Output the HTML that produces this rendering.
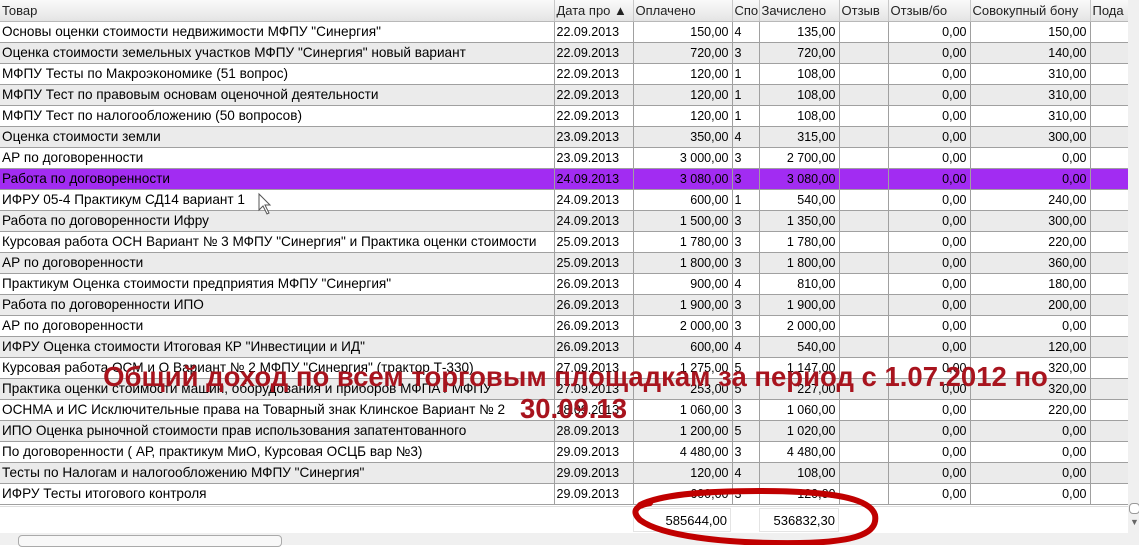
<!DOCTYPE html>
<html><head><meta charset="utf-8"><style>
body{margin:0;width:1139px;height:545px;overflow:hidden;background:#fff;font-family:"Liberation Sans","DejaVu Sans",sans-serif;font-size:13.6px;color:#000;position:relative}
table{border-collapse:collapse;table-layout:fixed;position:absolute;left:0;top:0;width:1128px}
td,th{height:20px;padding:0 3px 0 2px;border-right:1px solid #a0a0a0;border-bottom:1px solid #a0a0a0;white-space:nowrap;overflow:hidden;font-weight:normal;text-align:left;line-height:20px}
td.n{font-size:12.5px}
th{height:21px;background:linear-gradient(#fafafa,#e4e4e4);border-right:1px solid #c8c8c8;border-bottom:1px solid #b8b8b8;color:#222;font-size:13px}
td.r{text-align:right;font-size:12.5px}
tr:nth-child(even) td{background:#ebebeb}
tr.sel td{background:#a22cf2!important}
.vs{position:absolute;left:1128px;top:0;width:11px;height:545px;background:#f0f0f0}
.foot{position:absolute;left:0;top:506px;width:1128px;height:27px;background:#fff;border-top:1px solid #ddd}
.hs{position:absolute;left:0;top:533px;width:1128px;height:12px;background:#f0f0f0}
.t{position:absolute;left:0;width:1139px;text-align:center;font-weight:bold;font-size:27.5px;color:#a8141e}
</style></head><body>
<table>
<colgroup><col style="width:554px"><col style="width:79px"><col style="width:99px"><col style="width:27px"><col style="width:80px"><col style="width:49px"><col style="width:82px"><col style="width:120px"><col style="width:38px"></colgroup>
<thead><tr><th>Товар</th><th>Дата про ▲</th><th>Оплачено</th><th>Спо</th><th>Зачислено</th><th>Отзыв</th><th>Отзыв/бо</th><th>Совокупный бону</th><th>Пода</th></tr></thead>
<tbody>
<tr><td>Основы оценки стоимости недвижимости МФПУ "Синергия"</td><td class="n">22.09.2013</td><td class="r">150,00</td><td class="n">4</td><td class="r">135,00</td><td></td><td class="r">0,00</td><td class="r">150,00</td><td></td></tr>
<tr><td>Оценка стоимости земельных участков МФПУ "Синергия" новый вариант</td><td class="n">22.09.2013</td><td class="r">720,00</td><td class="n">3</td><td class="r">720,00</td><td></td><td class="r">0,00</td><td class="r">140,00</td><td></td></tr>
<tr><td>МФПУ Тесты по Макроэкономике (51 вопрос)</td><td class="n">22.09.2013</td><td class="r">120,00</td><td class="n">1</td><td class="r">108,00</td><td></td><td class="r">0,00</td><td class="r">310,00</td><td></td></tr>
<tr><td>МФПУ Тест по правовым основам оценочной деятельности</td><td class="n">22.09.2013</td><td class="r">120,00</td><td class="n">1</td><td class="r">108,00</td><td></td><td class="r">0,00</td><td class="r">310,00</td><td></td></tr>
<tr><td>МФПУ Тест по налогообложению (50 вопросов)</td><td class="n">22.09.2013</td><td class="r">120,00</td><td class="n">1</td><td class="r">108,00</td><td></td><td class="r">0,00</td><td class="r">310,00</td><td></td></tr>
<tr><td>Оценка стоимости земли</td><td class="n">23.09.2013</td><td class="r">350,00</td><td class="n">4</td><td class="r">315,00</td><td></td><td class="r">0,00</td><td class="r">300,00</td><td></td></tr>
<tr><td>АР по договоренности</td><td class="n">23.09.2013</td><td class="r">3 000,00</td><td class="n">3</td><td class="r">2 700,00</td><td></td><td class="r">0,00</td><td class="r">0,00</td><td></td></tr>
<tr class="sel"><td>Работа по договоренности</td><td class="n">24.09.2013</td><td class="r">3 080,00</td><td class="n">3</td><td class="r">3 080,00</td><td></td><td class="r">0,00</td><td class="r">0,00</td><td></td></tr>
<tr><td>ИФРУ 05-4 Практикум СД14 вариант 1</td><td class="n">24.09.2013</td><td class="r">600,00</td><td class="n">1</td><td class="r">540,00</td><td></td><td class="r">0,00</td><td class="r">240,00</td><td></td></tr>
<tr><td>Работа по договоренности Ифру</td><td class="n">24.09.2013</td><td class="r">1 500,00</td><td class="n">3</td><td class="r">1 350,00</td><td></td><td class="r">0,00</td><td class="r">300,00</td><td></td></tr>
<tr><td>Курсовая работа ОСН Вариант № 3 МФПУ "Синергия" и Практика оценки стоимости</td><td class="n">25.09.2013</td><td class="r">1 780,00</td><td class="n">3</td><td class="r">1 780,00</td><td></td><td class="r">0,00</td><td class="r">220,00</td><td></td></tr>
<tr><td>АР по договоренности</td><td class="n">25.09.2013</td><td class="r">1 800,00</td><td class="n">3</td><td class="r">1 800,00</td><td></td><td class="r">0,00</td><td class="r">360,00</td><td></td></tr>
<tr><td>Практикум Оценка стоимости предприятия МФПУ "Синергия"</td><td class="n">26.09.2013</td><td class="r">900,00</td><td class="n">4</td><td class="r">810,00</td><td></td><td class="r">0,00</td><td class="r">180,00</td><td></td></tr>
<tr><td>Работа по договоренности ИПО</td><td class="n">26.09.2013</td><td class="r">1 900,00</td><td class="n">3</td><td class="r">1 900,00</td><td></td><td class="r">0,00</td><td class="r">200,00</td><td></td></tr>
<tr><td>АР по договоренности</td><td class="n">26.09.2013</td><td class="r">2 000,00</td><td class="n">3</td><td class="r">2 000,00</td><td></td><td class="r">0,00</td><td class="r">0,00</td><td></td></tr>
<tr><td>ИФРУ Оценка стоимости Итоговая КР "Инвестиции и ИД"</td><td class="n">26.09.2013</td><td class="r">600,00</td><td class="n">4</td><td class="r">540,00</td><td></td><td class="r">0,00</td><td class="r">120,00</td><td></td></tr>
<tr><td>Курсовая работа ОСМ и О Вариант № 2 МФПУ "Синергия" (трактор Т-330)</td><td class="n">27.09.2013</td><td class="r">1 275,00</td><td class="n">5</td><td class="r">1 147,00</td><td></td><td class="r">0,00</td><td class="r">320,00</td><td></td></tr>
<tr><td>Практика оценки стоимости машин, оборудования и приборов МФПА / МФПУ</td><td class="n">27.09.2013</td><td class="r">253,00</td><td class="n">5</td><td class="r">227,00</td><td></td><td class="r">0,00</td><td class="r">320,00</td><td></td></tr>
<tr><td>ОСНМА и ИС Исключительные права на Товарный знак Клинское Вариант № 2</td><td class="n">28.09.2013</td><td class="r">1 060,00</td><td class="n">3</td><td class="r">1 060,00</td><td></td><td class="r">0,00</td><td class="r">220,00</td><td></td></tr>
<tr><td>ИПО Оценка рыночной стоимости прав использования запатентованного</td><td class="n">28.09.2013</td><td class="r">1 200,00</td><td class="n">5</td><td class="r">1 020,00</td><td></td><td class="r">0,00</td><td class="r">0,00</td><td></td></tr>
<tr><td>По договоренности ( АР, практикум МиО, Курсовая ОСЦБ вар №3)</td><td class="n">29.09.2013</td><td class="r">4 480,00</td><td class="n">3</td><td class="r">4 480,00</td><td></td><td class="r">0,00</td><td class="r">0,00</td><td></td></tr>
<tr><td>Тесты по Налогам и налогообложению МФПУ "Синергия"</td><td class="n">29.09.2013</td><td class="r">120,00</td><td class="n">4</td><td class="r">108,00</td><td></td><td class="r">0,00</td><td class="r">0,00</td><td></td></tr>
<tr><td>ИФРУ Тесты итогового контроля</td><td class="n">29.09.2013</td><td class="r">600,00</td><td class="n">3</td><td class="r">120,00</td><td></td><td class="r">0,00</td><td class="r">0,00</td><td></td></tr>
</tbody></table>
<div class="foot">
<div style="position:absolute;left:633px;top:1px;width:98px;height:24px;border:1px solid #e4e4e4;text-align:right;line-height:24px;font-size:13px;box-sizing:border-box;padding-right:3px">585644,00</div>
<div style="position:absolute;left:759px;top:1px;width:80px;height:24px;border:1px solid #e4e4e4;text-align:right;line-height:24px;font-size:13px;box-sizing:border-box;padding-right:3px">536832,30</div>
</div>
<div class="hs"><div style="position:absolute;left:18px;top:2px;width:262px;height:10px;border:1px solid #aaa;border-radius:4px;background:#f8f8f8"></div></div>
<div class="vs"><div style="position:absolute;left:1px;top:503px;width:9px;height:9px;border:1px solid #999;border-radius:4px;background:#fff"></div><div style="position:absolute;left:2px;top:517px;font-size:9px;color:#666">▼</div></div>
<svg style="position:absolute;left:0;top:0" width="1139" height="545"><path d="M259 194 l0 16 l4 -4 l4 8 l2 -1 l-4 -8 l5 0 z" fill="#fff" stroke="#555"/>
<path d="M640 505 C660 495 700 491 760 491 C830 491 870 498 875 515 C878 532 860 542 800 543 C720 544 660 535 640 520 C632 512 634 506 650 503" fill="none" stroke="#c00000" stroke-width="6" stroke-linecap="round"/></svg>
<div class="t" style="top:361px;left:6px">Общий доход по всем торговым площадкам за период с 1.07.2012 по</div>
<div class="t" style="top:393px;left:4px">30.09.13</div>
</body></html>
